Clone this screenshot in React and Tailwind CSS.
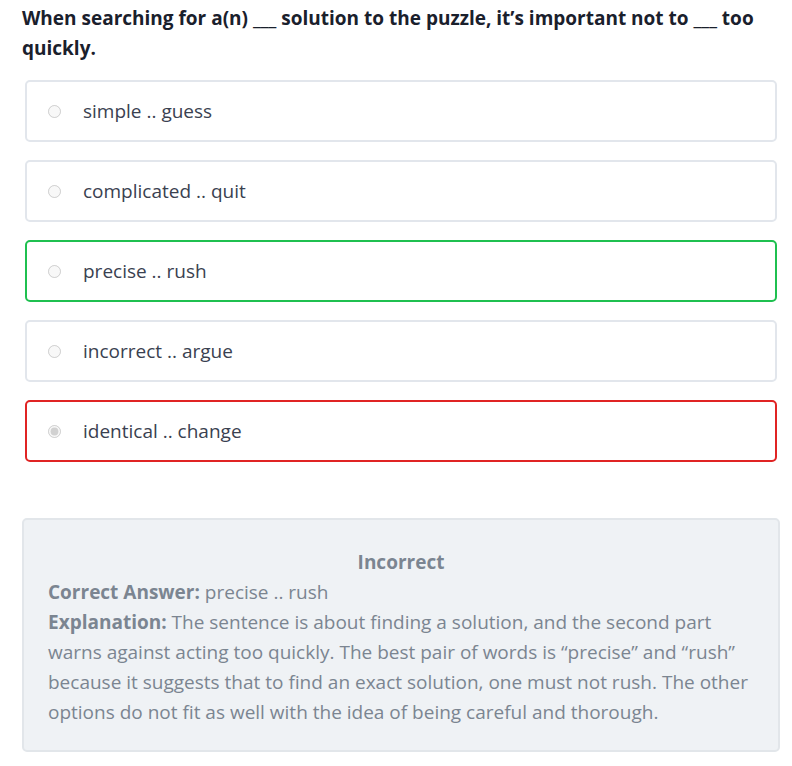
import { useState } from "react";

const opciones = [
  { id: 1, texto: "simple .. guess", estado: "normal" },
  { id: 2, texto: "complicated .. quit", estado: "normal" },
  { id: 3, texto: "precise .. rush", estado: "correcta" },
  { id: 4, texto: "incorrect .. argue", estado: "normal" },
  { id: 5, texto: "identical .. change", estado: "incorrecta" },
];

export default function App() {
  const [seleccion] = useState(5);

  return (
    <div
      className="h-screen overflow-hidden bg-white pl-[22px] pr-[12px] pt-[3px] text-[#2d3748]"
      style={{ fontFamily: '"Segoe UI", "Open Sans", "Noto Sans", sans-serif' }}
    >
      {/* Pregunta */}
      <h2 className="text-[19px] font-bold leading-[30px] text-[#1a202c]">
        When searching for a(n) ___ solution to the puzzle, it’s important not to ___ too quickly.
      </h2>

      {/* Opciones */}
      <div className="mt-[17px] flex flex-col gap-[18px] px-[3px]">
        {opciones.map((op) => (
          <label
            key={op.id}
            className={
              "flex h-[62px] items-center rounded-[5px] border-2 bg-white pl-[21px] " +
              (op.estado === "correcta"
                ? "border-[#1fc050]"
                : op.estado === "incorrecta"
                ? "border-[#e02424]"
                : "border-[#e2e6ec]")
            }
          >
            <input
              type="radio"
              name="respuesta"
              disabled
              checked={seleccion === op.id}
              readOnly
              className="m-0 h-[13px] w-[13px]"
            />
            <span className="ml-[22px] text-[19px] text-[#3a4150]">{op.texto}</span>
          </label>
        ))}
      </div>

      {/* Retroalimentación */}
      <div className="mt-[56px] rounded-[5px] border-2 border-[#e2e6ea] bg-[#eff2f5] px-[24px] pt-[27px] pb-[23px] text-[19px] leading-[30px] text-[#7b8591]">
        <p className="text-center font-bold">Incorrect</p>
        <p>
          <span className="font-bold">Correct Answer:</span> precise .. rush
        </p>
        <p>
          <span className="font-bold">Explanation:</span> The sentence is about finding a solution, and the
          second part warns against acting too quickly. The best pair of words is “precise” and “rush”
          because it suggests that to find an exact solution, one must not rush. The other options do not
          fit as well with the idea of being careful and thorough.
        </p>
      </div>
    </div>
  );
}
